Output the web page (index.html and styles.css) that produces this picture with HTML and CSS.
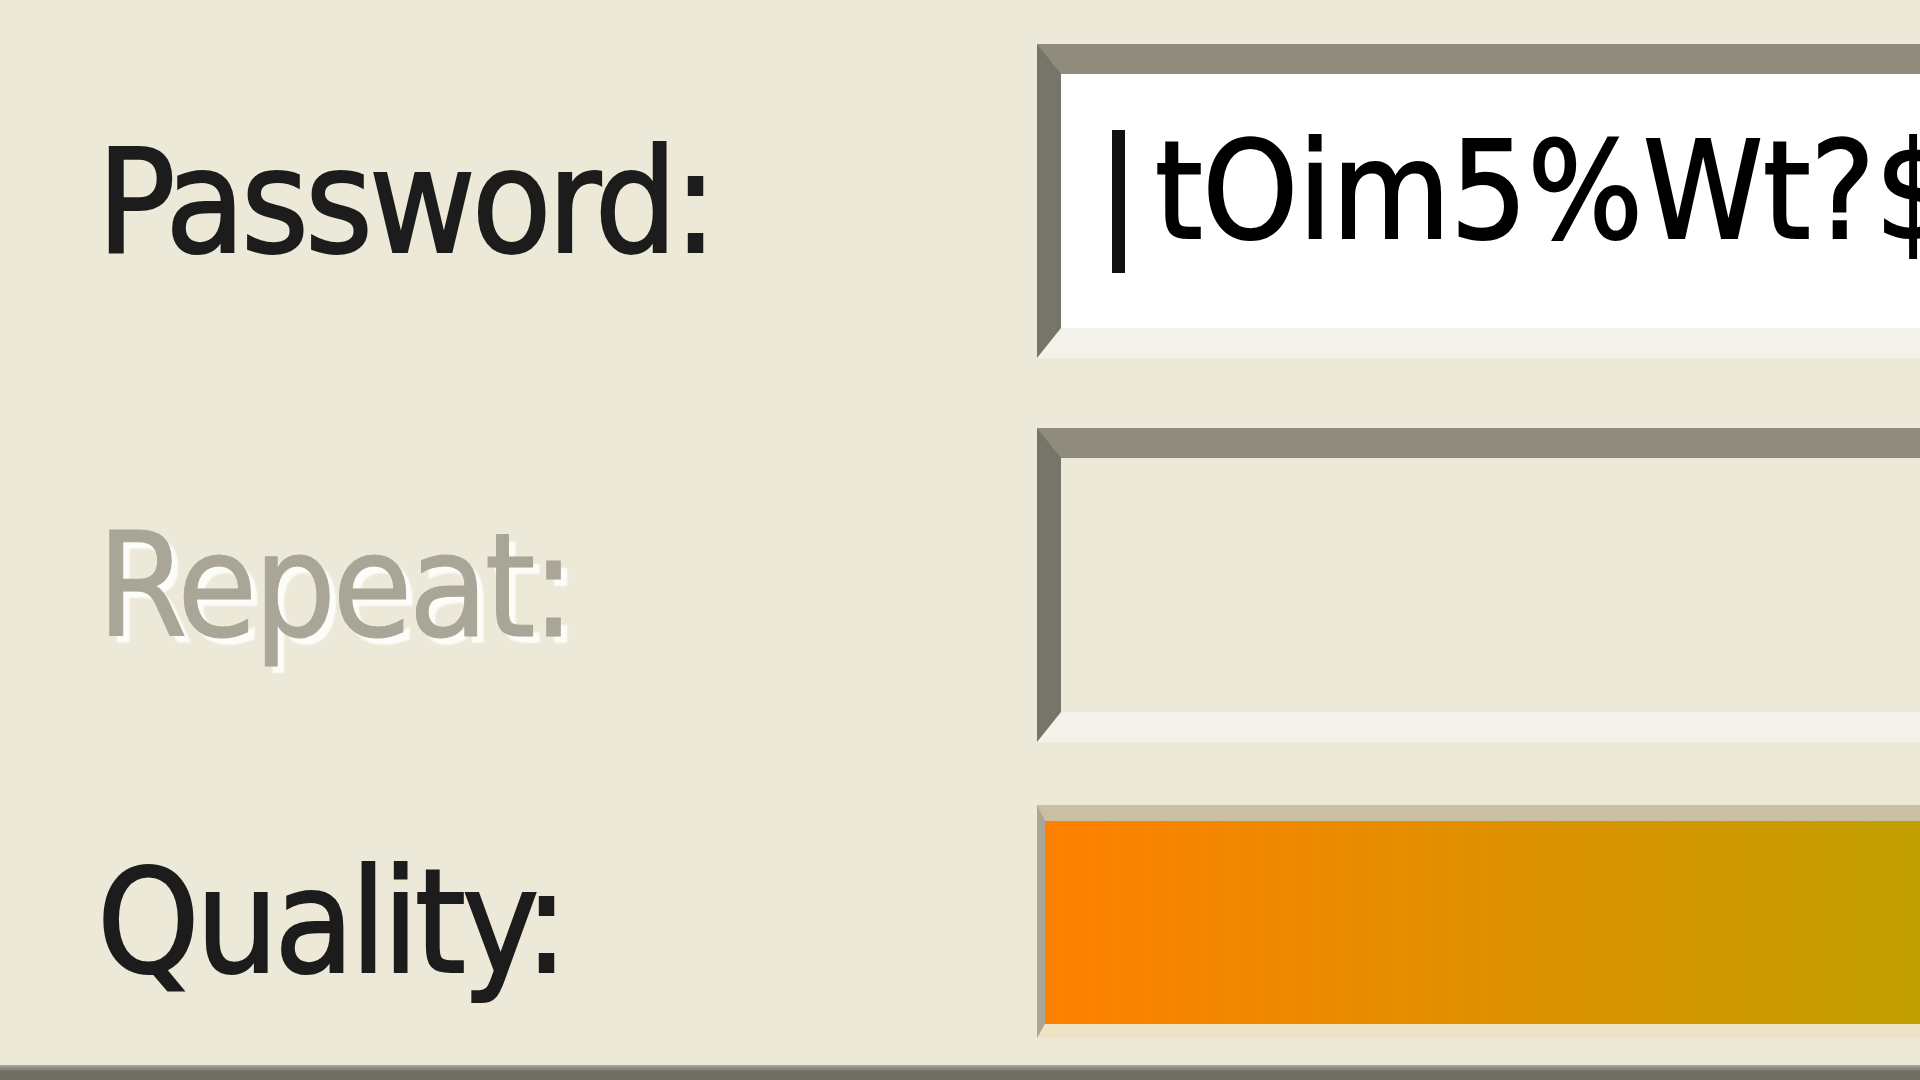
FILE: index.html
```html
<!DOCTYPE html>
<html lang="en">
<head>
    <meta charset="UTF-8">
    <title>Password</title>
    <link rel="stylesheet" href="styles.css">
</head>
<body>
    <div class="dialog">
        <div class="row row-password">
            <div class="label">Password:</div>
            <div class="field">
                <div class="field-inner">
                    <span class="caret"></span><span class="field-text">tOim5%Wt?$</span>
                </div>
            </div>
        </div>
        <div class="row row-repeat">
            <div class="label label-disabled">Repeat:</div>
            <div class="field field-disabled">
                <div class="field-inner"></div>
            </div>
        </div>
        <div class="row row-quality">
            <div class="label">Quality:</div>
            <div class="quality-bar"></div>
        </div>
    </div>
    <div class="statusbar"></div>
</body>
</html>
```

FILE: styles.css
```css
/* Password dialog */
body {
    margin: 0;
    width: 1920px;
    height: 1080px;
    overflow: hidden;
    display: flex;
    flex-direction: column;
    background-color: #ece9d8;
    font-family: "DejaVu Sans", "Liberation Sans", sans-serif;
    font-stretch: condensed;
}

.dialog {
    flex: 1;
    width: 2100px;
    padding-top: 44px;
}

.row {
    display: grid;
    grid-template-columns: 1037px 1fr;
    align-items: center;
}

.row-repeat {
    margin-top: 70px;
}

.row-quality {
    margin-top: 63px;
}

.label {
    padding-left: 97px;
    font-size: 145px;
    line-height: 1;
    letter-spacing: -4px;
    color: #1c1c1c;
    -webkit-text-stroke: 2px #1c1c1c;
    white-space: nowrap;
}

.label-disabled {
    color: #a9a697;
    -webkit-text-stroke: 1px #a9a697;
    text-shadow: 7px 7px 2px rgba(255, 255, 255, 0.85);
}

/* sunken line edit frame */
.field {
    height: 254px;
    border-style: solid;
    border-width: 30px 0 30px 24px;
    border-color: #8f8c7e transparent #f3f2eb #77756a;
    background-color: #fff;
}

.field-disabled {
    background-color: #ece9d8;
}

.field-inner {
    height: 100%;
    display: flex;
    align-items: center;
    padding-left: 51px;
}

.caret {
    width: 13px;
    height: 143px;
    margin-right: 30px;
    background-color: #111;
}

.field-text {
    font-size: 135px;
    line-height: 1;
    margin-bottom: 20px;
    color: #000;
    -webkit-text-stroke: 2px #000;
    white-space: nowrap;
}

/* strength meter */
.quality-bar {
    height: 203px;
    border-style: solid;
    border-width: 16px 0 14px 8px;
    border-color: #c9bfa2 transparent #f0e2c4 #a9a696;
    background: linear-gradient(to right, #ff8000 0, #c19f00 874px, #b3a400 1000px);
}

.statusbar {
    height: 15px;
    background: linear-gradient(#aaa99e, #6f6e65 45%);
}
```
